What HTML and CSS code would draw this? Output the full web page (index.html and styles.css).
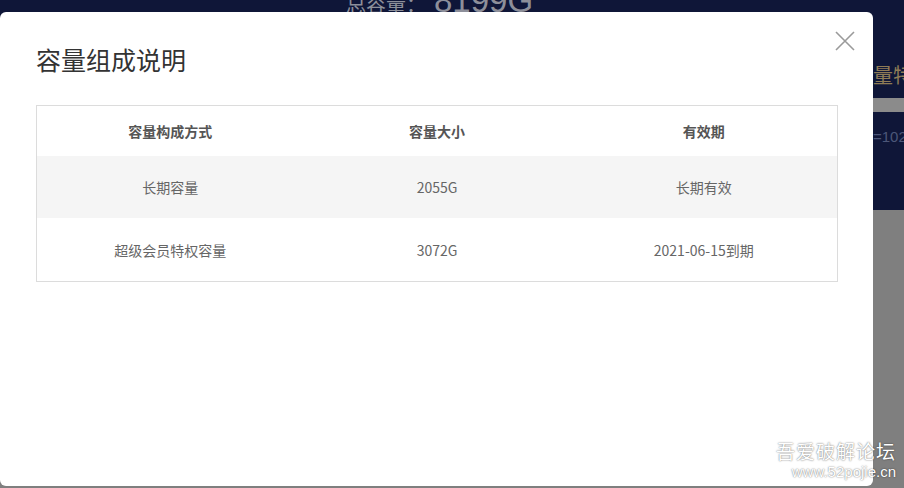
FILE: index.html
```html
<!DOCTYPE html>
<html lang="zh-CN">
<head>
    <meta charset="UTF-8">
    <meta name="viewport" content="width=device-width, initial-scale=1.0">
    <title>容量组成说明</title>
    <link rel="stylesheet" href="styles.css">
</head>
<body>
  <div class="page">
    <div class="banner">
      <div class="total"><span class="total-label">总容量：</span><span class="total-num">8199G</span></div>
      <div class="side">
        <div class="side-title">量特权</div>
        <div class="side-band"></div>
        <div class="side-note">=1024G</div>
      </div>
    </div>
  </div>

  <div class="modal">
    <button class="close" aria-label="关闭">
      <svg width="20" height="20" viewBox="0 0 20 20"><path d="M1 1L19 19M19 1L1 19" stroke="#9a9a9a" stroke-width="1.6" fill="none"/></svg>
    </button>
    <h2 class="modal-title">容量组成说明</h2>
    <table class="cap-table">
      <thead>
        <tr><th>容量构成方式</th><th>容量大小</th><th>有效期</th></tr>
      </thead>
      <tbody>
        <tr class="shade"><td>长期容量</td><td>2055G</td><td>长期有效</td></tr>
        <tr><td>超级会员特权容量</td><td>3072G</td><td>2021-06-15到期</td></tr>
      </tbody>
    </table>
  </div>

  <div class="watermark">
    <div class="wm-name">吾爱破解论坛</div>
    <div class="wm-url">www.52pojie.cn</div>
  </div>
</body>
</html>
```

FILE: styles.css
```css
body {
  margin: 0;
  width: 904px;
  height: 488px;
  overflow: hidden;
  background-color: #7f7f7f;
  font-family: "Noto Sans CJK SC", "Noto Sans", sans-serif;
}

.banner {
  height: 210px;
  background-color: #0f1638;
  overflow: hidden;
}

.total {
  margin-top: -14px;
  margin-left: 346px;
  color: #8d8f9a;
  line-height: 30px;
  white-space: nowrap;
}

.total-label {
  font-size: 20px;
}

.total-num {
  font-family: "Liberation Sans", sans-serif;
  font-size: 33px;
  margin-left: 8px;
}

.side {
  margin-left: 873px;
  margin-top: 42px;
}

.side-title {
  color: #8e7b56;
  font-size: 20px;
  line-height: 26px;
  white-space: nowrap;
}

.side-band {
  height: 14px;
  margin-top: 10px;
  background-color: #8b8b8b;
}

.side-note {
  margin-top: 16px;
  color: #4c5678;
  font-family: "Liberation Sans", sans-serif;
  font-size: 15px;
  white-space: nowrap;
}

.modal {
  position: absolute;
  top: 12px;
  left: 0;
  width: 873px;
  height: 474px;
  box-sizing: border-box;
  padding: 29px 35px 0 36px;
  background-color: #fff;
  border-radius: 6px;
}

.close {
  position: absolute;
  top: 19px;
  right: 18px;
  padding: 0;
  border: none;
  background: none;
  cursor: pointer;
}

.modal-title {
  margin: 0 0 28px;
  font-size: 25px;
  font-weight: normal;
  line-height: 36px;
  color: #333;
}

.cap-table {
  width: 802px;
  border: 1px solid #dcdcdc;
  border-collapse: collapse;
  table-layout: fixed;
  font-size: 14px;
}

.cap-table th,
.cap-table td {
  padding: 0;
  text-align: center;
}

.cap-table th {
  height: 50px;
  color: #555;
  font-weight: bold;
}

.cap-table td {
  height: 62px;
  color: #666;
}

.cap-table tbody tr:last-child td {
  height: 63px;
}

.cap-table .shade {
  background-color: #f5f5f5;
}

.watermark {
  position: absolute;
  right: 8px;
  top: 439px;
  color: #fff;
  text-align: right;
  text-shadow: 0 0 2px rgba(0, 0, 0, 0.45), 0 0 1px rgba(0, 0, 0, 0.3);
}

.wm-name {
  font-size: 19px;
  line-height: 24px;
  letter-spacing: 1px;
}

.wm-url {
  font-family: "Liberation Sans", sans-serif;
  font-size: 15px;
  line-height: 17px;
}
```
